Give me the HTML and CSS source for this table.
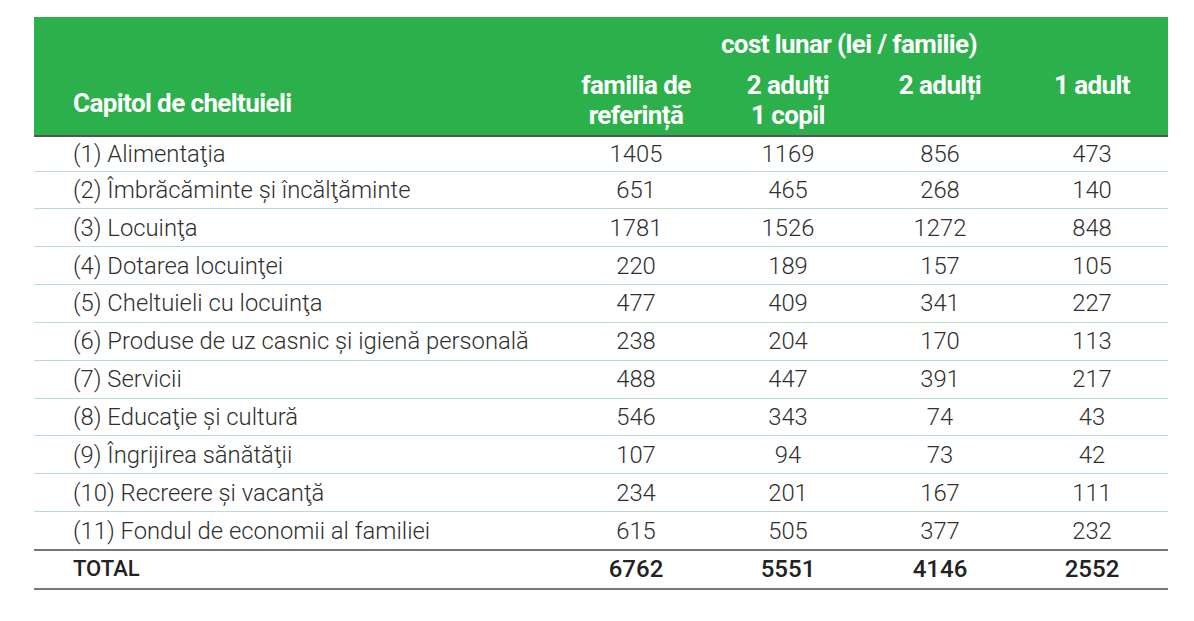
FILE: index.html
```html
<!DOCTYPE html>
<html lang="ro">
<head>
<meta charset="utf-8">
<title>Cost lunar</title>
<link rel="stylesheet" href="styles.css">
</head>
<body>
<table class="costs">
  <thead>
    <tr class="head-top">
      <th class="cap" rowspan="2">Capitol de cheltuieli</th>
      <th class="group" colspan="4">cost lunar (lei / familie)</th>
    </tr>
    <tr class="head-sub">
      <th>familia de<br>referință</th>
      <th>2 adulți<br>1 copil</th>
      <th>2 adulți</th>
      <th>1 adult</th>
    </tr>
  </thead>
  <tbody>
    <tr class="first"><td class="label">(1) Alimentaţia</td><td>1405</td><td>1169</td><td>856</td><td>473</td></tr>
    <tr><td class="label">(2) Îmbrăcăminte și încălţăminte</td><td>651</td><td>465</td><td>268</td><td>140</td></tr>
    <tr><td class="label">(3) Locuinţa</td><td>1781</td><td>1526</td><td>1272</td><td>848</td></tr>
    <tr><td class="label">(4) Dotarea locuinţei</td><td>220</td><td>189</td><td>157</td><td>105</td></tr>
    <tr><td class="label">(5) Cheltuieli cu locuinţa</td><td>477</td><td>409</td><td>341</td><td>227</td></tr>
    <tr><td class="label">(6) Produse de uz casnic și igienă personală</td><td>238</td><td>204</td><td>170</td><td>113</td></tr>
    <tr><td class="label">(7) Servicii</td><td>488</td><td>447</td><td>391</td><td>217</td></tr>
    <tr><td class="label">(8) Educaţie și cultură</td><td>546</td><td>343</td><td>74</td><td>43</td></tr>
    <tr><td class="label">(9) Îngrijirea sănătăţii</td><td>107</td><td>94</td><td>73</td><td>42</td></tr>
    <tr><td class="label">(10) Recreere și vacanţă</td><td>234</td><td>201</td><td>167</td><td>111</td></tr>
    <tr class="last"><td class="label">(11) Fondul de economii al familiei</td><td>615</td><td>505</td><td>377</td><td>232</td></tr>
    <tr class="total"><td class="label">TOTAL</td><td>6762</td><td>5551</td><td>4146</td><td>2552</td></tr>
  </tbody>
</table>
</body>
</html>
```

FILE: styles.css
```css
html, body {
  margin: 0;
  background: #ffffff;
}

body {
  padding: 17px 0 0 34px;
  font-family: Roboto, "Liberation Sans", sans-serif;
  color: #2f2f2f;
}

.costs {
  width: 1134px;
  border-collapse: collapse;
  table-layout: fixed;
}

.costs th {
  background: #2cb04b;
  color: #ffffff;
  font-weight: 700;
  font-size: 26px;
  letter-spacing: -0.6px;
  padding: 0;
}

.costs th.cap {
  width: 487px;
  text-align: left;
  vertical-align: bottom;
  padding: 0 0 17px 39px;
  line-height: 30px;
}

.head-top th.group {
  height: 53px;
  vertical-align: middle;
  line-height: 30px;
  padding: 0 30px 0 0;
  text-align: center;
}

.head-sub th {
  width: 152px;
  height: 65px;
  vertical-align: top;
  text-align: center;
  line-height: 30px;
  padding: 0;
}

.costs thead {
  border-bottom: 2px solid #555555;
}

.costs td {
  height: 36.85px;
  padding: 0;
  font-size: 23.8px;
  font-weight: 300;
  line-height: 26px;
  text-align: center;
  vertical-align: middle;
  border-bottom: 1px solid #b9ddc5;
}

.costs tr.first td {
  height: 33.5px;
}

.costs td.label {
  text-align: left;
  padding-left: 39px;
}

.costs tr.last td {
  border-bottom: 2px solid #777777;
}

.costs tr.total td {
  font-size: 24px;
  font-weight: 500;
  border-bottom: 2px solid #777777;
  color: #222222;
}

.costs tr.total td.label {
  font-size: 22px;
  font-weight: 500;
}
```
